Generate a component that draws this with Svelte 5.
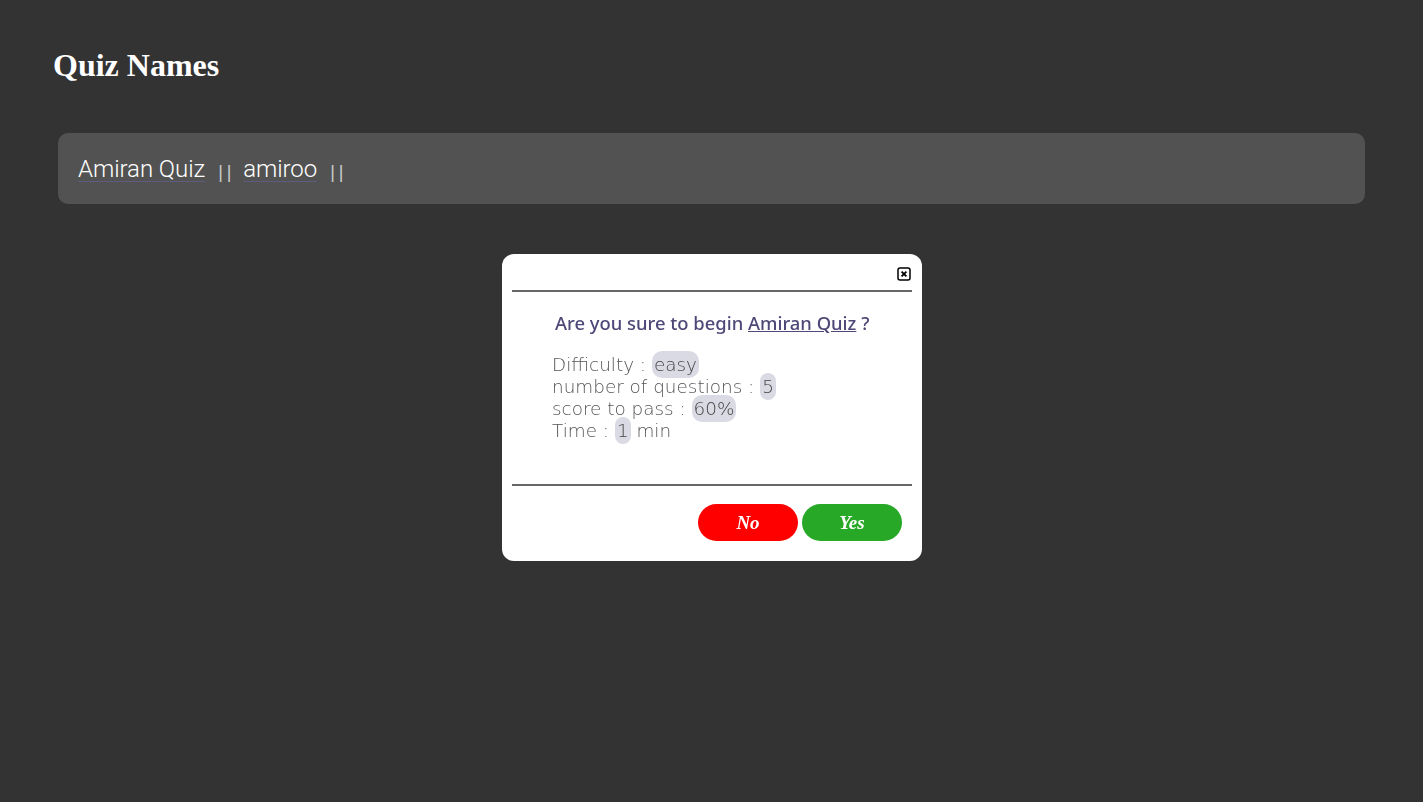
<script>
  let quiz = { name: "Amiran Quiz", author: "amiroo", difficulty: "easy", questions: 5, score: "60%", time: 1 };
</script>

<main class="page">
  <h1 class="title">Quiz Names</h1>
  <div class="quizRow">
    <a href="#quiz" class="quizLink">{quiz.name}</a>
    <span class="sep">| |</span>
    <a href="#author" class="quizLink">{quiz.author}</a>
    <span class="sep">| |</span>
  </div>
</main>

<div class="modal">
  <div class="modalHead">
    <button class="close" aria-label="close">
      <svg width="14" height="14" viewBox="0 0 14 14">
        <rect x="1" y="1" width="12" height="12" rx="2" fill="none" stroke="#000" stroke-width="1.5" />
        <path d="M4.6 4.6 9.4 9.4M9.4 4.6 4.6 9.4" stroke="#000" stroke-width="1.8" />
      </svg>
    </button>
  </div>
  <div class="modalBody">
    <p class="question">Are you sure to begin <u>{quiz.name}</u> ?</p>
    <div class="details">
      <div>Difficulty : <span class="pill">{quiz.difficulty}</span></div>
      <div>number of questions : <span class="pill">{quiz.questions}</span></div>
      <div>score to pass : <span class="pill">{quiz.score}</span></div>
      <div>Time : <span class="pill">{quiz.time}</span> min</div>
    </div>
  </div>
  <div class="modalFoot">
    <button class="btn no">No</button>
    <button class="btn yes">Yes</button>
  </div>
</div>

<style>
  :global(body) {
    background-color: #333;
    min-height: 802px;
  }

  .page {
    padding: 47px 58px 0;
  }

  .title {
    margin: 0 0 0 -5px;
    color: #fff;
    font-family: "Liberation Serif", serif;
    font-size: 32px;
    font-weight: bold;
    line-height: 37px;
  }

  .quizRow {
    display: flex;
    align-items: center;
    gap: 13px;
    height: 71px;
    box-sizing: border-box;
    margin-top: 49px;
    padding: 0 20px;
    background-color: #525252;
    border-radius: 10px;
  }

  .quizLink {
    color: #fff;
    font-family: Roboto, sans-serif;
    font-size: 24px;
    font-weight: 300;
    letter-spacing: -0.05px;
    text-decoration: underline;
    text-decoration-color: #5f5b80;
    text-decoration-thickness: 1px;
    text-underline-offset: 4px;
  }

  .sep {
    color: #ccc;
    font-family: "Liberation Sans", sans-serif;
    font-size: 18px;
    margin-top: 7px;
    width: 12px;
    word-spacing: -1px;
    white-space: nowrap;
  }

  .modal {
    position: fixed;
    top: 254px;
    left: 502px;
    width: 420px;
    height: 307px;
    box-sizing: border-box;
    padding: 0 10px;
    display: flex;
    flex-direction: column;
    background-color: #fff;
    border-radius: 12px;
  }

  .modalHead {
    display: flex;
    justify-content: flex-end;
    align-items: center;
    height: 36px;
    flex-shrink: 0;
    border-bottom: 2px solid #666;
  }

  .close {
    display: flex;
    padding: 0;
    border: 0;
    background: none;
    margin: 4px 1px 0 0;
  }

  .modalBody {
    flex: 1;
    padding: 0 40px;
    border-bottom: 2px solid #666;
  }

  .question {
    margin: 19px 0 0 3px;
    color: #4d4877;
    font-family: "Noto Sans", sans-serif;
    font-size: 18.4px;
    font-weight: 500;
    line-height: 24px;
    white-space: nowrap;
  }

  .details {
    margin-top: 19px;
    color: #555;
    font-family: "DejaVu Sans", sans-serif;
    font-size: 18.4px;
    font-weight: 200;
    line-height: 22px;
    white-space: nowrap;
  }

  .pill {
    padding: 3px 2px;
    color: #444;
    background-color: #dadae4;
    border-radius: 10px;
  }

  .modalFoot {
    display: flex;
    justify-content: flex-end;
    gap: 4px;
    height: 75px;
    flex-shrink: 0;
    box-sizing: border-box;
    padding: 18px 10px 0 0;
  }

  .btn {
    width: 100px;
    height: 37px;
    border: 0;
    border-radius: 19px;
    color: #fff;
    font-family: "Liberation Serif", serif;
    font-size: 19px;
    font-style: italic;
    font-weight: bold;
  }

  .no {
    background-color: #ff0000;
  }

  .yes {
    background-color: #27a827;
  }
</style>
